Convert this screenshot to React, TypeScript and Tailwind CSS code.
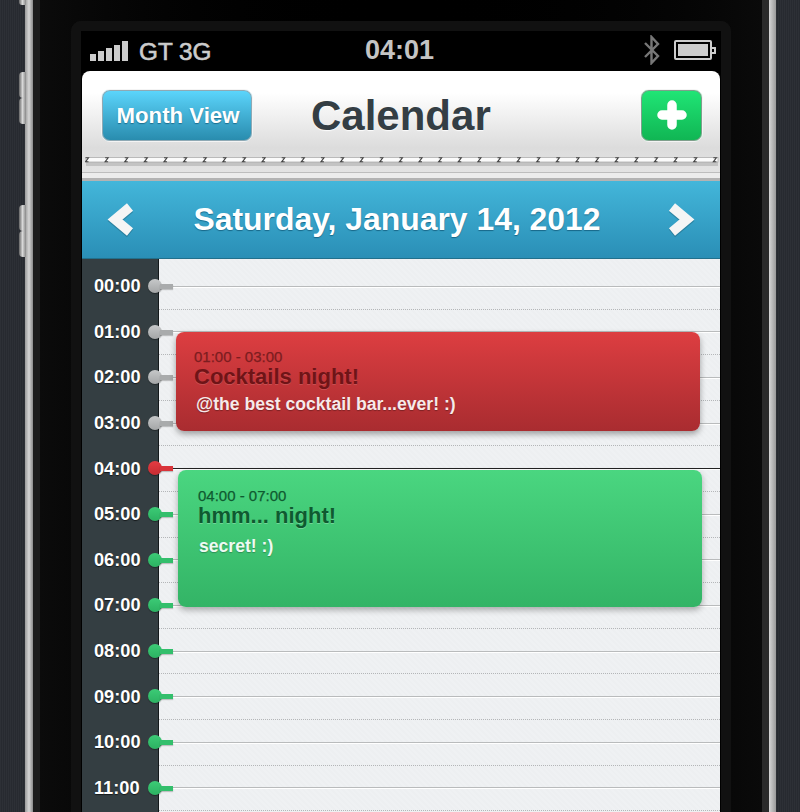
import React from "react";

const fabric =
  "bg-[#2a2d33] bg-[repeating-linear-gradient(90deg,#2d3036_0px,#2d3036_1px,#272a30_1px,#272a30_2px)]";
const paper =
  "bg-[#eef0f2] bg-[repeating-linear-gradient(45deg,#eff1f3_0px,#eff1f3_2px,#edeff1_2px,#edeff1_4px)]";

const hours = ["00:00","01:00","02:00","03:00","04:00","05:00","06:00","07:00","08:00","09:00","10:00","11:00"];

function pinClass(i: number) {
  if (i < 4) return { dot: "bg-gradient-to-b from-[#c6c8c9] to-[#a4a6a7]", tail: "bg-[#a9abac]" };
  if (i === 4) return { dot: "bg-gradient-to-b from-[#e43c42] to-[#c82c32]", tail: "bg-[#d9343a]" };
  return { dot: "bg-gradient-to-b from-[#3ccb76] to-[#2cb262]", tail: "bg-[#33bf6c]" };
}

function SideKnob({ top }: { top: string }) {
  return (
    <div className={`absolute left-[19px] w-[7px] flex flex-col ${top}`}>
      <div className="h-[26px] rounded-l-[4px] bg-gradient-to-r from-[#666] via-[#d8d8d8] to-[#888]" />
      <div className="h-[26px] rounded-l-[4px] bg-gradient-to-r from-[#666] via-[#d8d8d8] to-[#888]" />
    </div>
  );
}

function StatusBar() {
  return (
    <div className="h-[40px] relative flex items-center text-[#cccccc]">
      <div className="flex items-end gap-[2px] ml-[8px] h-[20px] -mt-[1px]">
        {["h-[7px]", "h-[10px]", "h-[13px]", "h-[16px]", "h-[20px]"].map((h) => (
          <div key={h} className={`w-[6px] bg-[#cccccc] ${h}`} />
        ))}
      </div>
      <span className="ml-[11px] text-[24.3px] font-normal leading-none [-webkit-text-stroke:0.6px_#cccccc] mt-[2px]">GT 3G</span>
      <span className="absolute left-[283px] top-[4px] text-[27px] font-bold leading-[30px] text-[#c4c4c4]">04:01</span>
      <svg className="absolute left-[561px] top-[4px]" width="18" height="30" viewBox="0 0 18 30" fill="none" stroke="#777" strokeWidth="2.4">
        <path d="M2 8 L15 21 L8.5 28 L8.5 2 L15 9 L2 22" />
      </svg>
      <div className="absolute left-[592px] top-[9px] w-[38px] h-[20px] border-2 border-[#cccccc] rounded-[2px] p-[2px]">
        <div className="w-full h-full bg-[#cccccc]" />
      </div>
      <div className="absolute left-[630px] top-[16px] w-[4px] h-[7px] border-2 border-l-0 border-[#cccccc] rounded-r-[1px]" />
    </div>
  );
}

function Stitch() {
  const nodes = Array.from({ length: 33 }, (_, i) => 2 + i * 19.62);
  return (
    <svg className="block ml-[3px]" width="634" height="12" viewBox="0 0 634 12">
      <rect x="1" y="6" width="632" height="4" fill="#000" opacity="0.13" />
      <rect x="1" y="1.5" width="632" height="4.5" fill="#fbfbfb" stroke="#a4a4a4" strokeWidth="0.7" />
      {nodes.map((x) => (
        <path key={x} d={`M${x - 1.5} 1.8 L${x + 1.5} 1.8 L${x - 1.5} 5.8 L${x + 1.5} 5.8`} fill="none" stroke="#444" strokeWidth="1.1" />
      ))}
    </svg>
  );
}

function Header() {
  return (
    <div className="rounded-t-[8px] overflow-hidden bg-gradient-to-b from-[#ffffff] from-[20%] via-[#dcdcdc] via-[70%] to-[#e6e6e6]">
      <div className="h-[85px] flex items-start pl-[19px] pr-[17px] pt-[18px]">
        <button className="w-[152px] h-[53px] pl-[2px] rounded-[9px] border border-[#f4f4f4] shadow-[inset_0_0_0_1px_#8fa9b4] bg-gradient-to-b from-[#5cd6fd] to-[#288bad] text-white text-[22.2px] font-bold flex items-center justify-center [text-shadow:0_1px_1px_rgba(0,60,90,0.5)]">
          Month View
        </button>
        <span className="ml-[58px] mt-[1px] text-[42px] font-bold leading-[52px] text-[#343e44] [text-shadow:0_1px_1px_rgba(255,255,255,0.9)]">Calendar</span>
        <button className="ml-auto w-[63px] h-[53px] rounded-[9px] border border-[#f4f4f4] shadow-[inset_0_0_0_1px_#7f9f8c] bg-gradient-to-b from-[#20e676] to-[#10b553] flex items-center justify-center">
          <svg className="-mt-[2px]" width="30" height="30" viewBox="0 0 30 30">
            <path d="M15 5 V25 M5 15 H25" stroke="#fff" strokeWidth="9.5" strokeLinecap="round" />
          </svg>
        </button>
      </div>
      <Stitch />
      <div className="h-[4px]" />
      <div className="h-[1px] bg-[#bdbdbd]" />
      <div className="h-[5px] bg-[#ececec]" />
      <div className="h-[3px] bg-[#b3b3b3]" />
    </div>
  );
}

function DateBar() {
  return (
    <div className="h-[78px] flex items-center justify-between px-[24px] border-b border-[#22708c] bg-gradient-to-b from-[#43b6da] to-[#2a8fb6] text-white">
      <svg width="32" height="40" viewBox="0 0 32 40" fill="none">
        <path d="M24 7 L9 19.5 L24 32" stroke="#000" strokeOpacity="0.18" strokeWidth="9.5" transform="translate(0 1.5)" />
        <path d="M24 7 L9 19.5 L24 32" stroke="#f5f5f5" strokeWidth="9.5" />
      </svg>
      <span className="mr-[8px] text-[31.9px] font-bold [text-shadow:0_1px_1px_rgba(0,60,90,0.55)]">Saturday, January 14, 2012</span>
      <svg width="32" height="40" viewBox="0 0 32 40" fill="none">
        <path d="M8 7 L23 19.5 L8 32" stroke="#000" strokeOpacity="0.18" strokeWidth="9.5" transform="translate(0 1.5)" />
        <path d="M8 7 L23 19.5 L8 32" stroke="#f5f5f5" strokeWidth="9.5" />
      </svg>
    </div>
  );
}

function Row({ label, i }: { label: string; i: number }) {
  const pin = pinClass(i);
  return (
    <div className="flex h-[45.6px]">
      <div className="relative w-[77px] shrink-0 bg-[#343e42] border-r border-[#14191b] flex items-center pl-[12px]">
        <span className="-mt-[1px] text-[18.2px] font-bold leading-none text-white [text-shadow:0_1px_1px_rgba(0,0,0,0.6)]">{label}</span>
        <div className={`absolute left-[66px] top-[15px] w-[14px] h-[14px] rounded-full shadow-[0_1px_1px_rgba(0,0,0,0.35)] ${pin.dot}`} />
        <div className={`absolute left-[78px] top-[20px] w-[13px] h-[5px] shadow-[0_1px_1px_rgba(0,0,0,0.2)] ${pin.tail}`} />
      </div>
      <div className="flex-1 flex flex-col">
        <div className={`h-1/2 border-b ${i === 4 ? "border-[#222]" : "border-[#b9bbbc]"} shadow-[0_1px_0_#ffffff]`} />
        <div className="h-1/2 border-b border-dotted border-[#b4b6b8]" />
      </div>
    </div>
  );
}

function Timeline() {
  return (
    <div className={`relative ${paper}`}>
      <div className="w-[77px] h-[5px] bg-[#343e42] border-r border-[#14191b]" />
      {hours.map((h, i) => (
        <Row key={h} label={h} i={i} />
      ))}
      <div className="w-[77px] h-[5px] bg-[#343e42] border-r border-[#14191b]" />
      <div className="absolute left-[94px] top-[73px] w-[524px] h-[99px] rounded-[8px] bg-gradient-to-b from-[#dd3e41] to-[#a92c30] shadow-[0_3px_6px_rgba(0,0,0,0.35)] px-[18px] pt-[17px]">
        <div className="text-[15px] leading-[15px] text-[#7c1d20] [-webkit-text-stroke:0.25px_#7c1d20]">01:00 - 03:00</div>
        <div className="text-[22px] font-bold leading-[25px] text-[#6f1417] [text-shadow:0_1px_0_rgba(255,255,255,0.15)]">Cocktails night!</div>
        <div className="text-[17.6px] font-bold leading-[20px] mt-[5px] ml-[2px] text-[#f7eaea] [text-shadow:0_1px_1px_rgba(0,0,0,0.3)]">@the best cocktail bar...ever! :)</div>
      </div>
      <div className="absolute left-[96px] top-[211px] w-[524px] h-[137px] rounded-[8px] bg-gradient-to-b from-[#4ad680] to-[#33b466] shadow-[0_3px_6px_rgba(0,0,0,0.3)] px-[20px] pt-[18px]">
        <div className="text-[15px] leading-[15px] text-[#0f5a30] [-webkit-text-stroke:0.25px_#0f5a30]">04:00 - 07:00</div>
        <div className="text-[22px] font-bold leading-[25px] text-[#0e5a30] [text-shadow:0_1px_0_rgba(255,255,255,0.25)]">hmm... night!</div>
        <div className="text-[17.6px] font-bold leading-[20px] mt-[8px] ml-[1px] text-[#eefaf2] [text-shadow:0_1px_1px_rgba(0,0,0,0.25)]">secret! :)</div>
      </div>
    </div>
  );
}

export default function App() {
  return (
    <div className="relative h-[812px] w-[800px] overflow-hidden flex bg-black [font-family:'Liberation_Sans',Arial,sans-serif]">
      <div className={`w-[25px] shrink-0 ${fabric}`} />
      <div className="w-[8px] shrink-0 bg-gradient-to-r from-[#9a9a9a] via-[#d6d6d6] to-[#8a8a8a]" />
      <div className="w-[7px] shrink-0 bg-[#1c1c1c]" />
      <div className="flex-1 px-[31px] pt-[21px] bg-gradient-to-r from-[#0b0b0b] via-[#000] to-[#0a0a0a]">
        <div className="h-[900px] rounded-t-[10px] border-[10px] border-b-0 border-[#111111] bg-black px-[1px]">
          <StatusBar />
          <Header />
          <DateBar />
          <Timeline />
        </div>
      </div>
      <div className="w-[7px] shrink-0 bg-[#2a2a2a]" />
      <div className="w-[7px] shrink-0 bg-gradient-to-r from-[#d6d6d6] to-[#9a9a9a]" />
      <div className={`w-[24px] shrink-0 ${fabric}`} />
      <SideKnob top="top-[72px]" />
      <SideKnob top="top-[205px]" />
      <div className="absolute left-[19px] top-0 w-[7px] h-[5px] rounded-bl-[3px] bg-gradient-to-r from-[#666] via-[#d8d8d8] to-[#888]" />
    </div>
  );
}
